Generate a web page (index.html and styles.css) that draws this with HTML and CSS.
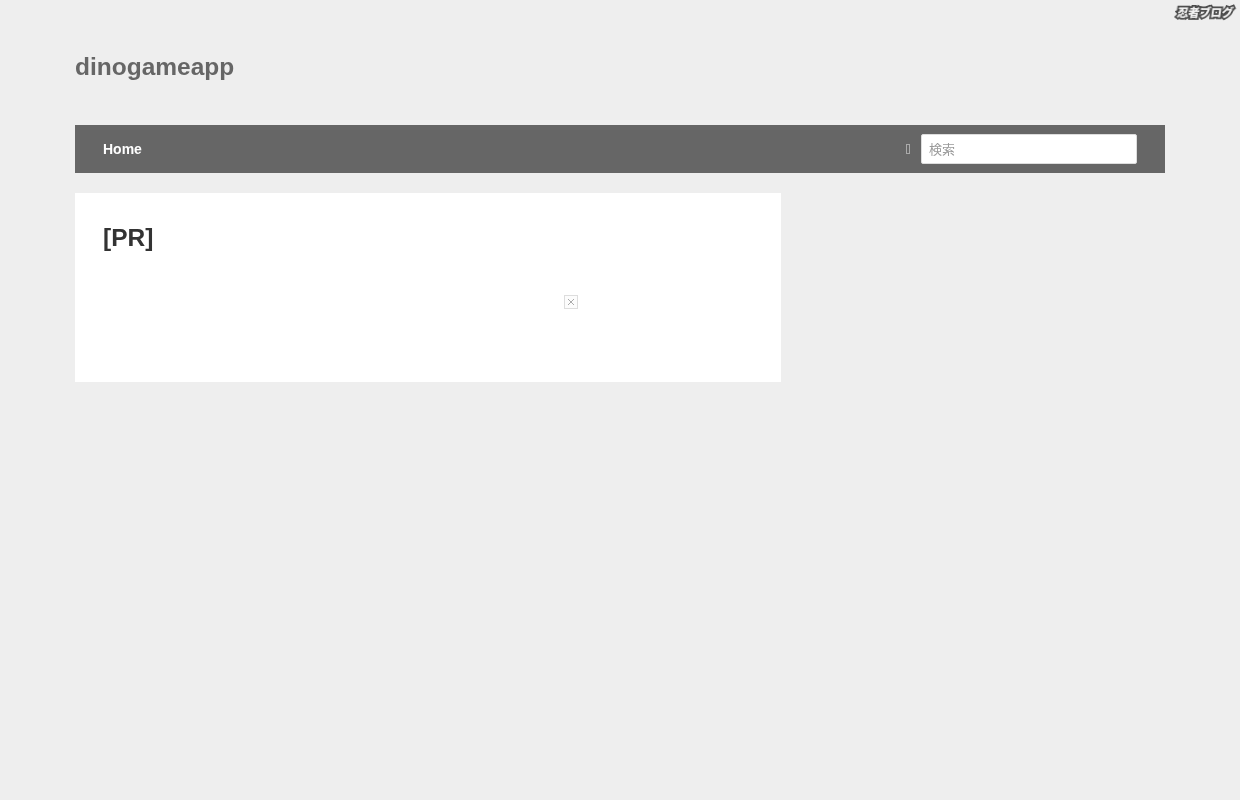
FILE: index.html
```html
<!DOCTYPE html>
<html lang="ja">
<head>
  <meta charset="UTF-8" />
  <title>dinogameapp</title>
  <link rel="stylesheet" href="styles.css">
</head>
<body>
  <a class="ninja-logo" href="#">忍者ブログ</a>

  <div class="wrap">
    <header class="site-header">
      <h1 class="site-title">dinogameapp</h1>
    </header>

    <nav class="site-nav">
      <a class="nav-link" href="#">Home</a>
      <form class="search">
        <span class="search-icon"></span>
        <input class="search-input" type="text" placeholder="検索" />
      </form>
    </nav>

    <main class="content">
      <article class="post">
        <h2 class="post-title">[PR]</h2>
        <div class="ad">
          <span class="ad-close">
            <svg width="8" height="8" viewBox="0 0 8 8"><path d="M1 1l6 6M7 1L1 7" /></svg>
          </span>
        </div>
      </article>
    </main>
  </div>
</body>
</html>
```

FILE: styles.css
```css
body {
  margin: 0;
  background: #eee;
  color: #333;
  font-family: "Liberation Sans", "Noto Sans CJK JP", sans-serif;
  min-height: 800px;
  position: relative;
}

.ninja-logo {
  position: absolute;
  top: 5px;
  right: 7px;
  width: 56px;
  height: 15px;
  color: #f2f2f2;
  font-family: "Noto Sans CJK JP", sans-serif;
  font-size: 11.5px;
  font-weight: 900;
  letter-spacing: -0.4px;
  line-height: 15px;
  text-align: center;
  white-space: nowrap;
  text-decoration: none;
  transform: skewX(-8deg);
  will-change: transform;
  paint-order: stroke fill;
  -webkit-text-stroke: 3.5px #4a4a4a;
}

.wrap {
  margin: 0 75px;
  will-change: transform;
}

.site-header {
  height: 125px;
}

.site-title {
  margin: 0;
  padding-top: 52px;
  color: #666;
  font-size: 24.5px;
  line-height: 30px;
  font-weight: 700;
}

.site-nav {
  display: flex;
  align-items: center;
  justify-content: space-between;
  height: 48px;
  padding: 0 28px;
  background: #666;
}

.nav-link {
  color: #fff;
  font-size: 14px;
  font-weight: 700;
  text-decoration: none;
}

.search {
  display: flex;
  align-items: center;
  gap: 11px;
  margin: 0;
}

.search-icon {
  width: 2px;
  height: 8px;
  border: 1px solid #aaa;
  margin-top: -1px;
}

.search-input {
  width: 216px;
  height: 30px;
  box-sizing: border-box;
  padding: 0 7px;
  background: #fff;
  border: 1px solid #ddd;
  border-radius: 2px;
  font-family: "Liberation Sans", "Noto Sans CJK JP", sans-serif;
  font-size: 13px;
}

.search-input::placeholder {
  color: #999;
}

.content {
  width: 706px;
  margin-top: 20px;
}

.post {
  height: 189px;
  box-sizing: border-box;
  padding: 28px;
  background: #fff;
}

.post-title {
  margin: 0;
  color: #333;
  font-size: 24.5px;
  line-height: 34px;
  font-weight: 700;
}

.ad {
  display: flex;
  justify-content: center;
  width: 650px;
  margin-top: 40px;
  padding-left: 286px;
  box-sizing: border-box;
}

.ad-close {
  display: flex;
  align-items: center;
  justify-content: center;
  width: 14px;
  height: 14px;
  box-sizing: border-box;
  border: 1px solid #ddd;
  background: #fcfcfc;
}

.ad-close svg path {
  fill: none;
  stroke: #aaa;
  stroke-width: 1;
}
```
